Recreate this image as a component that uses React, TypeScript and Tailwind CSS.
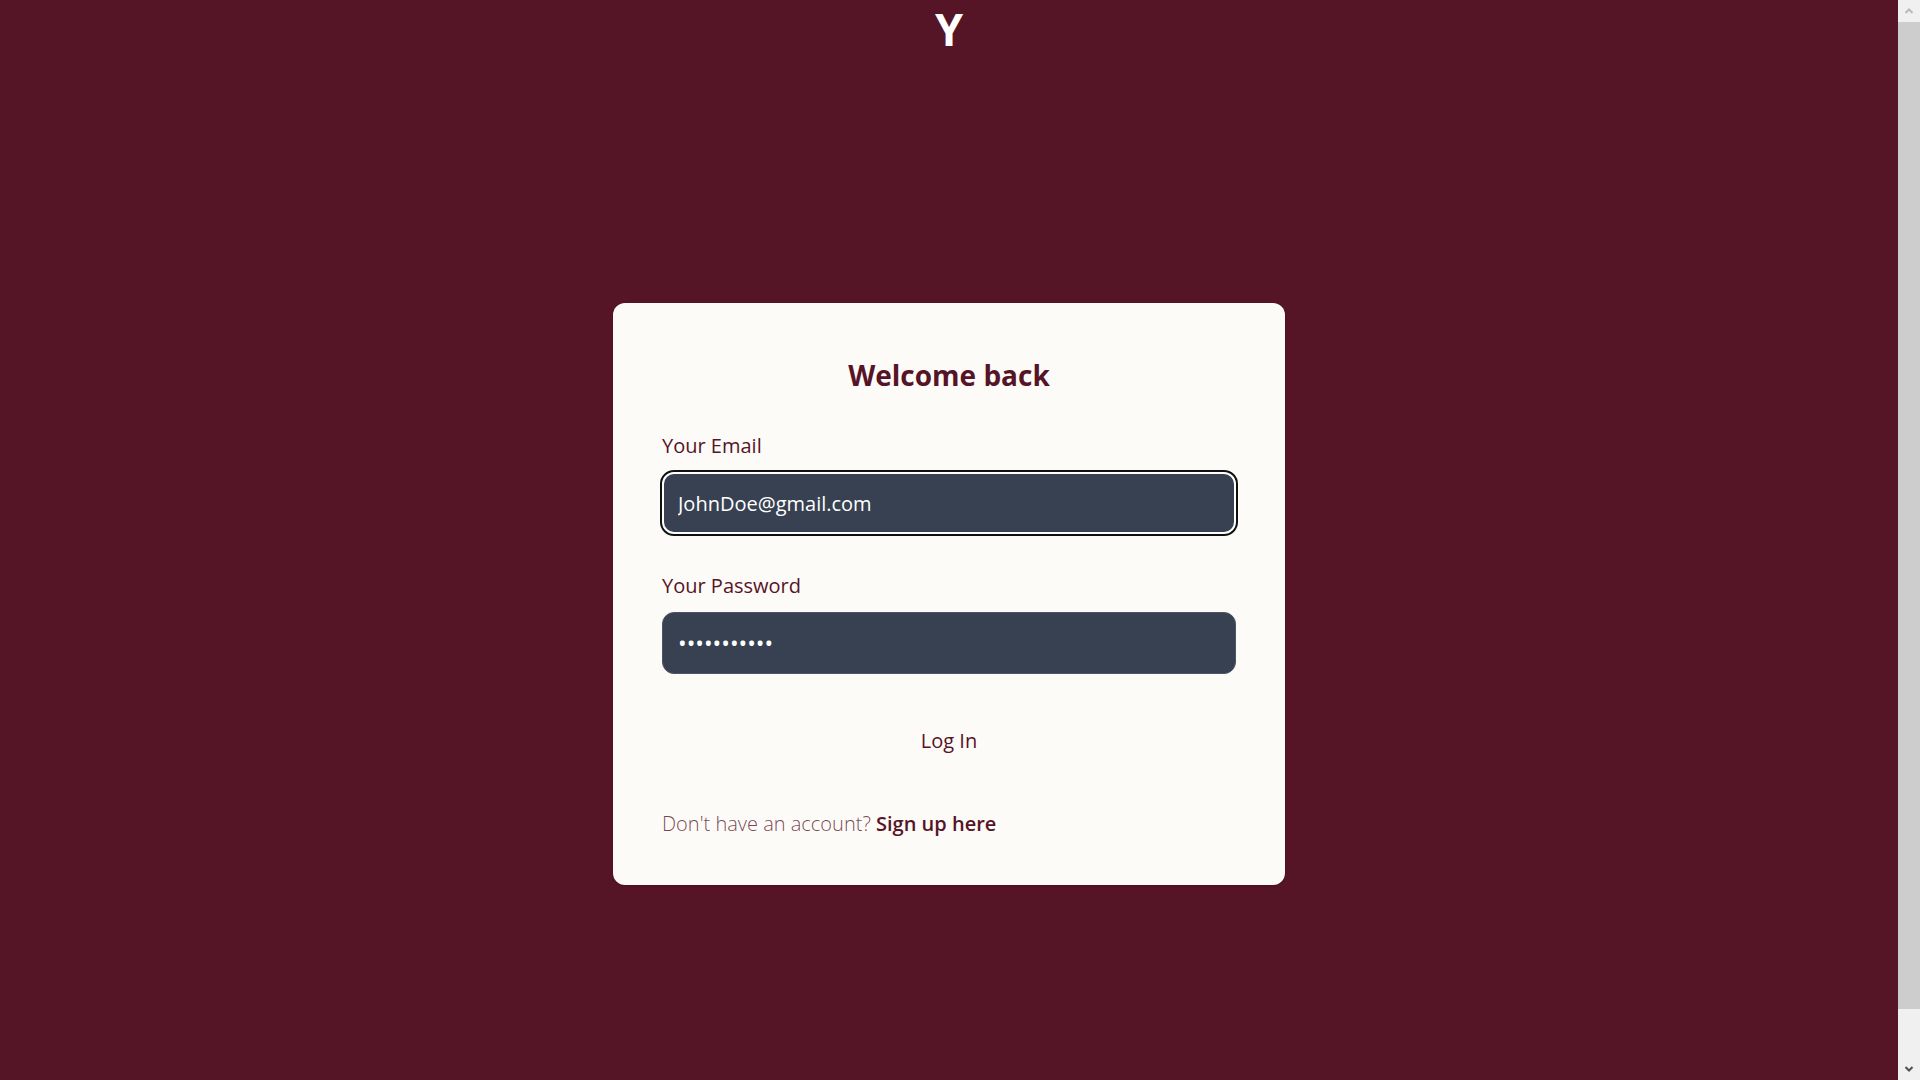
import React from "react";

function Field({
  id,
  label,
  type,
  value,
  ringed = false,
}: {
  id: string;
  label: string;
  type: string;
  value: string;
  ringed?: boolean;
}) {
  return (
    <div className="flex flex-col gap-[11px]">
      <label htmlFor={id} className="text-[20px] leading-[30px] font-medium">
        {label}
      </label>
      <input
        id={id}
        name={id}
        type={type}
        defaultValue={value}
        className={
          ringed
            ? "h-[62px] w-full rounded-xl border-2 border-white bg-[#374151] px-[14px] text-[20px] text-white outline-2 outline-[#101010]"
            : "h-[62px] w-full rounded-xl border border-[#4b5563] bg-[#374151] px-[15px] text-[23px] text-white outline-none"
        }
      />
    </div>
  );
}

function ScrollRail() {
  return (
    <div className="flex w-[22px] shrink-0 flex-col bg-[#f0f0f0]" aria-hidden="true">
      <div className="flex h-[22px] items-center justify-center">
        <svg width="8" height="6" viewBox="0 0 8 6" fill="none" stroke="#bababa" strokeWidth="2">
          <path d="M0.5 5 L4 1.5 L7.5 5" />
        </svg>
      </div>
      <div className="flex flex-1 flex-col">
        <div className="grow-[987] bg-[#cdcdcd]" />
        <div className="grow-[49]" />
      </div>
      <div className="flex h-[22px] items-center justify-center">
        <svg width="8" height="6" viewBox="0 0 8 6" fill="none" stroke="#505050" strokeWidth="2">
          <path d="M0.5 1 L4 4.5 L7.5 1" />
        </svg>
      </div>
    </div>
  );
}

export default function App() {
  return (
    <div className="flex h-screen bg-[#561427] font-['Open_Sans','Noto_Sans',sans-serif] text-[#561427]">
      <div className="flex flex-1 flex-col">
        <header className="flex h-[108px] shrink-0 justify-center">
          <a href="#" className="text-[45px] leading-[58px] font-bold text-white">
            Y
          </a>
        </header>
        <main className="flex flex-1 items-center justify-center">
          <form
            className="flex w-full max-w-2xl flex-col rounded-xl bg-[#fdfbf7] px-[49px] pt-12 pb-[46px] shadow-sm"
            onSubmit={(e) => e.preventDefault()}
          >
            <h1 className="text-center text-[28px] leading-[48px] font-bold">Welcome back</h1>
            <div className="mt-8 flex flex-col gap-[37px]">
              <Field id="email" label="Your Email" type="email" value="JohnDoe@gmail.com" ringed />
              <Field id="password" label="Your Password" type="password" value="password123" />
            </div>
            <button type="submit" className="mt-9 h-[62px] w-full text-[20px] font-medium">
              Log In
            </button>
            <p className="mt-[37px] text-[20px] leading-[30px] font-light text-[#561427]/80">
              Don't have an account?{" "}
              <a href="#" className="font-semibold text-[#561427]">
                Sign up here
              </a>
            </p>
          </form>
        </main>
      </div>
      <ScrollRail />
    </div>
  );
}
